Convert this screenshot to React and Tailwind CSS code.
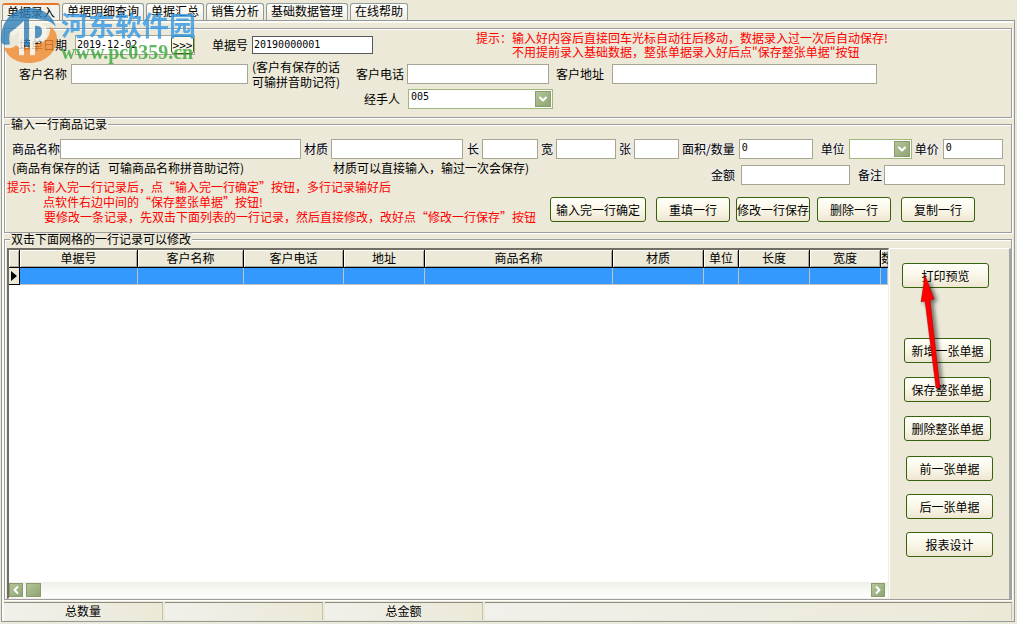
import { ChevronDown, ChevronLeft, ChevronRight } from 'lucide-react';

const tabs = ['单据录入', '单据明细查询', '单据汇总', '销售分析', '基础数据管理', '在线帮助'];

const columns = [
  { title: '单据号', width: 118 },
  { title: '客户名称', width: 106 },
  { title: '客户电话', width: 100 },
  { title: '地址', width: 81 },
  { title: '商品名称', width: 188 },
  { title: '材质', width: 91 },
  { title: '单位', width: 35 },
  { title: '长度', width: 71 },
  { title: '宽度', width: 71 },
];

const groupClass =
  'min-w-0 border border-[#9d9da1] shadow-[inset_1px_1px_0_#fff,1px_1px_0_#fff]';
const fieldClass =
  'h-5 border border-[#a7a694] bg-white px-[2px] pb-1 font-["DejaVu_Sans_Mono",monospace] text-[10px] leading-3 outline-none';
const greenBox =
  'flex items-center justify-center border border-[#8a9a70] bg-linear-to-br from-[#b5c59b] to-[#8ea572] text-white';

function XpButton({ children, className = '' }) {
  return (
    <button
      type="button"
      className={`h-[25px] shrink-0 whitespace-nowrap rounded-[3px] border border-[#37620c] bg-linear-to-b from-[#fffffa] via-[#faf7e8] to-[#efe6d2] leading-3 ${className}`}
    >
      {children}
    </button>
  );
}

function Label({ htmlFor, children, className = '' }) {
  return (
    <label htmlFor={htmlFor} className={`shrink-0 whitespace-nowrap ${className}`}>
      {children}
    </label>
  );
}

function Select({ id, options, className = '' }) {
  return (
    <div className={`relative shrink-0 ${className}`}>
      <select
        id={id}
        className='block h-5 w-full appearance-none border border-[#a0b87c] bg-white px-[2px] pb-1 font-["DejaVu_Sans_Mono",monospace] text-[10px] leading-3 outline-none'
      >
        {options.map((option) => (
          <option key={option}>{option}</option>
        ))}
      </select>
      <span className={`${greenBox} pointer-events-none absolute top-[2px] right-[2px] h-4 w-4`}>
        <ChevronDown size={12} strokeWidth={4} />
      </span>
    </div>
  );
}

function Watermark() {
  return (
    <div className="pointer-events-none absolute top-2 left-0 flex opacity-80">
      <svg width="58" height="56" viewBox="0 6 58 57" preserveAspectRatio="none">
        <path
          d="M1 41C0 19 13 6 30 6c13 0 23 8 26 19-5-5-10-7-15-7l-6-1h-6v27c-2 1-4 0-5-1V20L10 31c-1 4-1 8 0 12-4 1-7 0-9-2z"
          fill="#2f80ba"
        />
        <path
          d="M4 46c5 2 9 1 12-2l3 2v8h5v-8c2 1 4 1 6 0v8h5V43c10-1 16-8 15-18 5 3 7 7 7 12 0 14-12 25-28 25C16 62 7 56 4 46z"
          fill="#f28a30"
        />
        <path d="M11 32l13-13v34h-5V29l-7 6zM30 20h5v33h-5z" fill="#f8f6ee" />
        <path d="M35 20c8 0 12 4 12 10s-4 11-12 11v-4c4 0 7-2 7-7s-3-6-7-6z" fill="#f8f6ee" />
        <path d="M35 24c4 0 7 1 7 6s-3 7-7 7z" fill="#2f80ba" />
      </svg>
      <div className="pl-[3px]">
        <p className="text-[27px] leading-[34px] font-bold text-[#3399e6]">河东软件园</p>
        <p className='font-["Liberation_Serif",serif] text-xl leading-5 font-bold text-[#3aa63a]'>
          www.pc0359.cn
        </p>
      </div>
    </div>
  );
}

function CustomerGroup() {
  return (
    <fieldset className={`${groupClass} pt-[2px] pb-2`}>
      <div className="flex h-7 items-center pl-3.5">
        <Label htmlFor="date">填单日期</Label>
        <div className="ml-2 flex h-5 w-[120px] shrink-0 border border-[#a7a694] bg-white">
          <input
            id="date"
            defaultValue="2019-12-02"
            className='w-0 flex-1 px-px font-["DejaVu_Sans_Mono",monospace] text-[10px] outline-none'
          />
          <button
            type="button"
            className="flex w-[23px] items-center justify-center rounded-[3px] border border-[#37620c] bg-[#faf7e8]"
          >
            &gt;&gt;&gt;
          </button>
        </div>
        <Label htmlFor="billNo" className="ml-[17px]">单据号</Label>
        <input
          id="billNo"
          defaultValue="20190000001"
          className='ml-1 h-[18px] w-[121px] border border-[#55585f] bg-white px-px pb-[2px] font-["DejaVu_Sans_Mono",monospace] text-[10px] outline-none'
        />
        <p className="ml-[103px] leading-[14px] whitespace-nowrap text-[#f00]">
          提示：输入好内容后直接回车光标自动往后移动，数据录入过一次后自动保存!
          <span className="block pl-9">不用提前录入基础数据，整张单据录入好后点"保存整张单据"按钮</span>
        </p>
      </div>

      <div className="flex h-[30px] items-center pl-3.5">
        <Label htmlFor="customer">客户名称</Label>
        <input id="customer" className={`${fieldClass} ml-1 w-[177px]`} />
        <p className="ml-1 w-24 shrink-0 leading-[15px]">
          (客户有保存的话
          <br />
          可输拼音助记符)
        </p>
        <Label htmlFor="phone" className="ml-2">客户电话</Label>
        <input id="phone" className={`${fieldClass} ml-[3px] w-[142px]`} />
        <Label htmlFor="address" className="ml-[7px]">客户地址</Label>
        <input id="address" className={`${fieldClass} ml-2 w-[265px]`} />
      </div>

      <div className="flex items-center pl-[359px]">
        <Label htmlFor="handler">经手人</Label>
        <Select id="handler" options={['005']} className="ml-2 w-[145px]" />
      </div>
    </fieldset>
  );
}

function ItemGroup() {
  const tint = 'bg-[#eeecea]';
  return (
    <fieldset className={`${groupClass} pb-2`}>
      <legend className="ml-[5px] px-px leading-3">输入一行商品记录</legend>
      <div className="flex items-center pt-[9px] pl-[7px]">
        <Label htmlFor="item" className={tint}>商品名称</Label>
        <input id="item" className={`${fieldClass} w-[241px]`} />
        <Label htmlFor="material" className={`${tint} ml-[3px]`}>材质</Label>
        <input id="material" className={`${fieldClass} ml-[3px] w-[132px]`} />
        <Label htmlFor="length" className={`${tint} ml-1`}>长</Label>
        <input id="length" className={`${fieldClass} ml-[3px] w-14`} />
        <Label htmlFor="breadth" className={`${tint} ml-[3px]`}>宽</Label>
        <input id="breadth" className={`${fieldClass} ml-[3px] w-[60px]`} />
        <Label htmlFor="sheets" className={`${tint} ml-[3px]`}>张</Label>
        <input id="sheets" className={`${fieldClass} ml-[3px] w-[45px]`} />
        <Label htmlFor="quantity" className={`${tint} ml-[3px]`}>面积/数量</Label>
        <input id="quantity" defaultValue="0" className={`${fieldClass} ml-1 w-[74px]`} />
        <Label htmlFor="unit" className={`${tint} ml-2`}>单位</Label>
        <Select id="unit" options={['']} className="ml-1 w-[63px]" />
        <Label htmlFor="price" className={`${tint} ml-[3px]`}>单价</Label>
        <input id="price" defaultValue="0" className={`${fieldClass} ml-1 w-[60px]`} />
      </div>

      <div className="flex">
        <div className="w-[545px] shrink-0 pt-px leading-[15px] whitespace-nowrap">
          <p className="flex pl-[7px]">
            <span className="w-[321px]">(商品有保存的话&nbsp;&nbsp; 可输商品名称拼音助记符)</span>
            <span>材质可以直接输入，输过一次会保存)</span>
          </p>
          <p className="mt-1 pl-[2px] text-[#f00]">
            提示：输入完一行记录后，点“输入完一行确定”按钮，多行记录输好后
            <span className="block pl-9">点软件右边中间的“保存整张单据”按钮!</span>
            <span className="block pl-[37px]">要修改一条记录，先双击下面列表的一行记录，然后直接修改，改好点“修改一行保存”按钮</span>
          </p>
        </div>
        <div className="flex-1 pt-[6px]">
          <div className="flex items-center pl-[161px]">
            <Label htmlFor="amount" className={tint}>金额</Label>
            <input id="amount" className={`${fieldClass} ml-[6px] w-[109px]`} />
            <Label htmlFor="remark" className={`${tint} ml-2`}>备注</Label>
            <input id="remark" className={`${fieldClass} ml-[2px] w-[121px]`} />
          </div>
          <div className="mt-3 flex">
            <XpButton className="w-24">输入完一行确定</XpButton>
            <XpButton className="ml-[10px] w-[74px]">重填一行</XpButton>
            <XpButton className="ml-[6px] w-[74px]">修改一行保存</XpButton>
            <XpButton className="ml-[7px] w-[74px]">删除一行</XpButton>
            <XpButton className="ml-[10px] w-[74px]">复制一行</XpButton>
          </div>
        </div>
      </div>
    </fieldset>
  );
}

function Grid() {
  const head =
    'h-[18px] overflow-hidden border-r border-b border-black bg-[#ece9d8] p-0 pb-[2px] font-normal leading-3 whitespace-nowrap shadow-[inset_1px_1px_0_#fff,inset_-1px_-1px_0_#aca899]';
  const cell = 'h-[17px] border-r border-b border-[#c0c0c0] bg-[#3399ff] p-0';
  return (
    <div className="flex min-w-0 flex-1 flex-col border-t-2 border-r border-b border-l-2 border-t-[#716f64] border-r-[#f1efe2] border-b-[#f1efe2] border-l-[#716f64] bg-white">
      <table className="w-full table-fixed border-separate border-spacing-0">
        <colgroup>
          <col style={{ width: 11 }} />
          {columns.map((column) => (
            <col key={column.title} style={{ width: column.width }} />
          ))}
          <col />
        </colgroup>
        <thead>
          <tr>
            <th className={head} />
            {columns.map((column) => (
              <th key={column.title} className={head}>
                {column.title}
              </th>
            ))}
            <th className={`${head} border-r-0 text-left`}>数量</th>
          </tr>
        </thead>
        <tbody>
          <tr>
            <td className="border-r border-b border-black bg-[#ece9d8] p-0">
              <svg width="10" height="14" viewBox="0 0 10 14" className="block">
                <path d="M2 2v10l6-5z" fill="#000" />
              </svg>
            </td>
            {columns.map((column) => (
              <td key={column.title} className={cell} />
            ))}
            <td className={cell} />
          </tr>
        </tbody>
      </table>

      <div className="mt-auto flex h-4 items-center bg-linear-to-b from-[#f0f0ea] to-white pr-[3px]">
        <button type="button" aria-label="左移" className={`${greenBox} h-[14px] w-[14px]`}>
          <ChevronLeft size={12} strokeWidth={4} />
        </button>
        <span className={`${greenBox} ml-[3px] h-[14px] w-[15px]`} />
        <button type="button" aria-label="右移" className={`${greenBox} ml-auto h-[14px] w-[14px]`}>
          <ChevronRight size={12} strokeWidth={4} />
        </button>
      </div>
    </div>
  );
}

function SideBar() {
  return (
    <div className="relative w-[122px] shrink-0 border-t border-r-2 border-l border-t-white border-r-[#a5a5a5] border-l-white pt-[14px]">
      <div className="flex flex-col pl-3">
        <XpButton className="w-[87px]">打印预览</XpButton>
      </div>
      <div className="mt-[50px] flex flex-col gap-[14px] pl-3.5">
        <XpButton className="w-[87px]">新增一张单据</XpButton>
        <XpButton className="w-[87px]">保存整张单据</XpButton>
        <XpButton className="w-[87px]">删除整张单据</XpButton>
      </div>
      <div className="mt-[15px] flex flex-col gap-[13px] pl-4">
        <XpButton className="w-[87px]">前一张单据</XpButton>
        <XpButton className="w-[87px]">后一张单据</XpButton>
        <XpButton className="w-[87px]">报表设计</XpButton>
      </div>
      {/* arrow from save to print preview */}
      <svg
        width="30"
        height="124"
        viewBox="0 0 30 124"
        className="pointer-events-none absolute top-[22px] left-7 drop-shadow-[3px_2px_2px_rgba(0,0,0,0.55)]"
      >
        <path d="M7 4L3 31l4-1 11 87h4L12 29l4-1z" fill="#f00" stroke="#a00000" strokeWidth="0.5" />
      </svg>
    </div>
  );
}

function StatusBar() {
  const cell =
    'flex items-center justify-center border-t border-r border-t-[#8f8d7c] border-r-[#c5c2ac] bg-linear-to-r from-[#f1f0ea] to-[#ece9d8] pb-px';
  return (
    <div className="mt-[2px] flex h-[18px] gap-[2px]">
      <div className={`${cell} w-[159px]`}>总数量</div>
      <div className={`${cell} w-[158px]`} />
      <div className={`${cell} w-[158px]`}>总金额</div>
      <div className={`${cell} flex-1`} />
    </div>
  );
}

export default function App() {
  return (
    <div
      lang="zh-CN"
      className='relative flex min-h-screen flex-col overflow-hidden bg-[#ece9d8] pt-[3px] pr-[2px] pb-[2px] pl-px font-["Noto_Sans_CJK_SC",sans-serif] text-xs leading-3 text-black'
    >
      <div role="tablist" className="flex h-[17px] gap-[2px] pl-px">
        {tabs.map((tab, index) => (
          <button
            key={tab}
            type="button"
            role="tab"
            aria-selected={index === 0}
            className={`rounded-t-[3px] border border-b-0 px-1 pb-[2px] leading-3 whitespace-nowrap ${
              index === 0
                ? 'border-[#919b9c] border-t-2 border-t-[#e5742c] bg-[#f4f2e8]'
                : 'border-[#919b9c] bg-linear-to-b from-white to-[#efecdd]'
            }`}
          >
            {tab}
          </button>
        ))}
      </div>

      <main className="flex flex-1 flex-col border border-[#919b9c] px-[2px] pt-[7px] pb-px shadow-[inset_0_2px_0_#fbfaf5,inset_2px_0_0_#fbfaf5]">
        <CustomerGroup />
        <ItemGroup />
        <section className={`${groupClass} mt-[6px] flex flex-1 flex-col`}>
          <h2 className="-mt-[7px] ml-[5px] w-fit bg-[#ece9d8] px-px leading-3">
            双击下面网格的一行记录可以修改
          </h2>
          <div className="flex flex-1 pt-[3px] pl-[2px]">
            <Grid />
            <SideBar />
          </div>
        </section>
        <StatusBar />
      </main>

      <Watermark />
    </div>
  );
}
